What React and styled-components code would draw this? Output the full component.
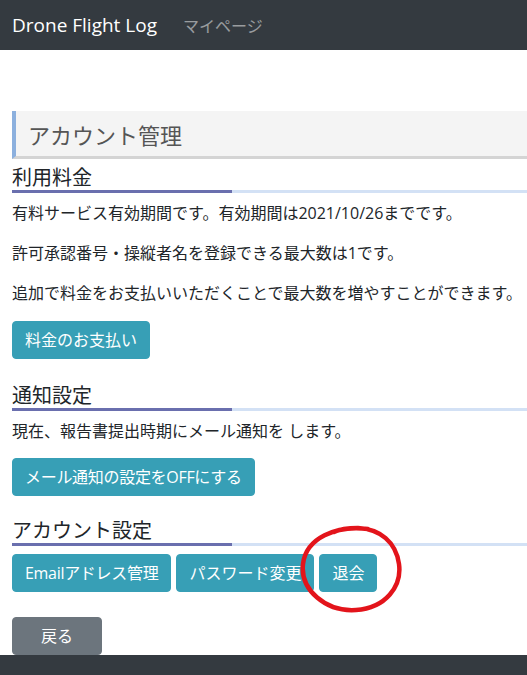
import React from "react";
import styled, { createGlobalStyle } from "styled-components";

const GlobalStyle = createGlobalStyle`
  html, body { margin: 0; padding: 0; background: #fff; }
  body {
    font-family: "Open Sans", "Noto Sans CJK JP", sans-serif;
    color: #212529;
  }
  * { box-sizing: border-box; }
`;

const Navbar = styled.nav`
  height: 50px;
  background: #343a40;
  display: flex;
  align-items: center;
  padding: 0 12px;
`;

const Brand = styled.span`
  font-size: 19px;
  color: #fff;
`;

const NavLink = styled.span`
  margin-left: 26px;
  font-size: 16px;
  color: rgba(255, 255, 255, 0.5);
`;

const Main = styled.main`
  padding: 61px 0 0 12px;
  overflow: hidden;
`;

const PageTitle = styled.h1`
  margin: 0 -40px 0 0;
  height: 48px;
  display: flex;
  align-items: center;
  padding: 0 12px;
  background: #f4f4f4;
  border-left: 4px solid #8cb0de;
  border-bottom: 3px solid #d4d4d4;
  font-size: 22px;
  font-weight: 400;
  color: #555;
`;

const SectionTitle = styled.h2`
  margin: ${(p) => p.$top}px -40px 0 0;
  font-size: 20px;
  font-weight: 400;
  line-height: 24px;
  padding-bottom: 3px;
  background: linear-gradient(to right, #6a6fae 220px, #d3e1f5 220px) left bottom / 100% 3px no-repeat;
`;

const Text = styled.p`
  margin: ${(p) => p.$top ?? 0}px 0 0 0;
  font-size: 16px;
  line-height: 24px;
`;

const ButtonRow = styled.div`
  position: relative;
  display: flex;
  gap: 5px;
  margin-top: ${(p) => p.$top}px;
`;

const Button = styled.button`
  font-family: inherit;
  font-size: 16px;
  line-height: 24px;
  letter-spacing: ${(p) => (p.$tight ? "-0.3px" : "normal")};
  padding: 6px ${(p) => (p.$wide ? 28 : 12)}px;
  border-radius: 4px;
  border: 1px solid ${(p) => (p.$gray ? "#6c757d" : "#379fb6")};
  background: ${(p) => (p.$gray ? "#6c757d" : "#379fb6")};
  color: #fff;
  cursor: pointer;
`;

const Annotation = styled.svg`
  position: absolute;
  left: 284px;
  top: -30px;
  width: 110px;
  height: 92px;
  pointer-events: none;
`;

const Footer = styled.footer`
  height: 80px;
  background: #343a40;
`;

export default function App() {
  return (
    <>
      <GlobalStyle />
      <Navbar>
        <Brand>Drone Flight Log</Brand>
        <NavLink>マイページ</NavLink>
      </Navbar>
      <Main>
        <PageTitle>アカウント管理</PageTitle>
        <SectionTitle $top={7}>利用料金</SectionTitle>
        <Text $top={8}>有料サービス有効期間です。有効期間は2021/10/26までです。</Text>
        <Text $top={16}>許可承認番号・操縦者名を登録できる最大数は1です。</Text>
        <Text $top={16}>追加で料金をお支払いいただくことで最大数を増やすことができます。</Text>
        <ButtonRow $top={16}>
          <Button>料金のお支払い</Button>
        </ButtonRow>
        <SectionTitle $top={25}>通知設定</SectionTitle>
        <Text $top={8}>現在、報告書提出時期にメール通知を します。</Text>
        <ButtonRow $top={15}>
          <Button $tight>メール通知の設定をOFFにする</Button>
        </ButtonRow>
        <SectionTitle $top={23}>アカウント設定</SectionTitle>
        <ButtonRow $top={8}>
          <Button $tight>Emailアドレス管理</Button>
          <Button>パスワード変更</Button>
          <Button>退会</Button>
          <Annotation viewBox="0 0 110 92">
            <path
              d="M72 5 C 40 1, 10 14, 7 40 C 4 66, 30 88, 60 86 C 90 84, 106 62, 103 40 C 100 18, 84 5, 62 4 C 52 4, 44 5, 38 8"
              fill="none"
              stroke="#e3141b"
              strokeWidth="4.5"
              strokeLinecap="round"
            />
          </Annotation>
        </ButtonRow>
        <ButtonRow $top={25}>
          <Button $gray $wide>戻る</Button>
        </ButtonRow>
      </Main>
      <Footer />
    </>
  );
}
